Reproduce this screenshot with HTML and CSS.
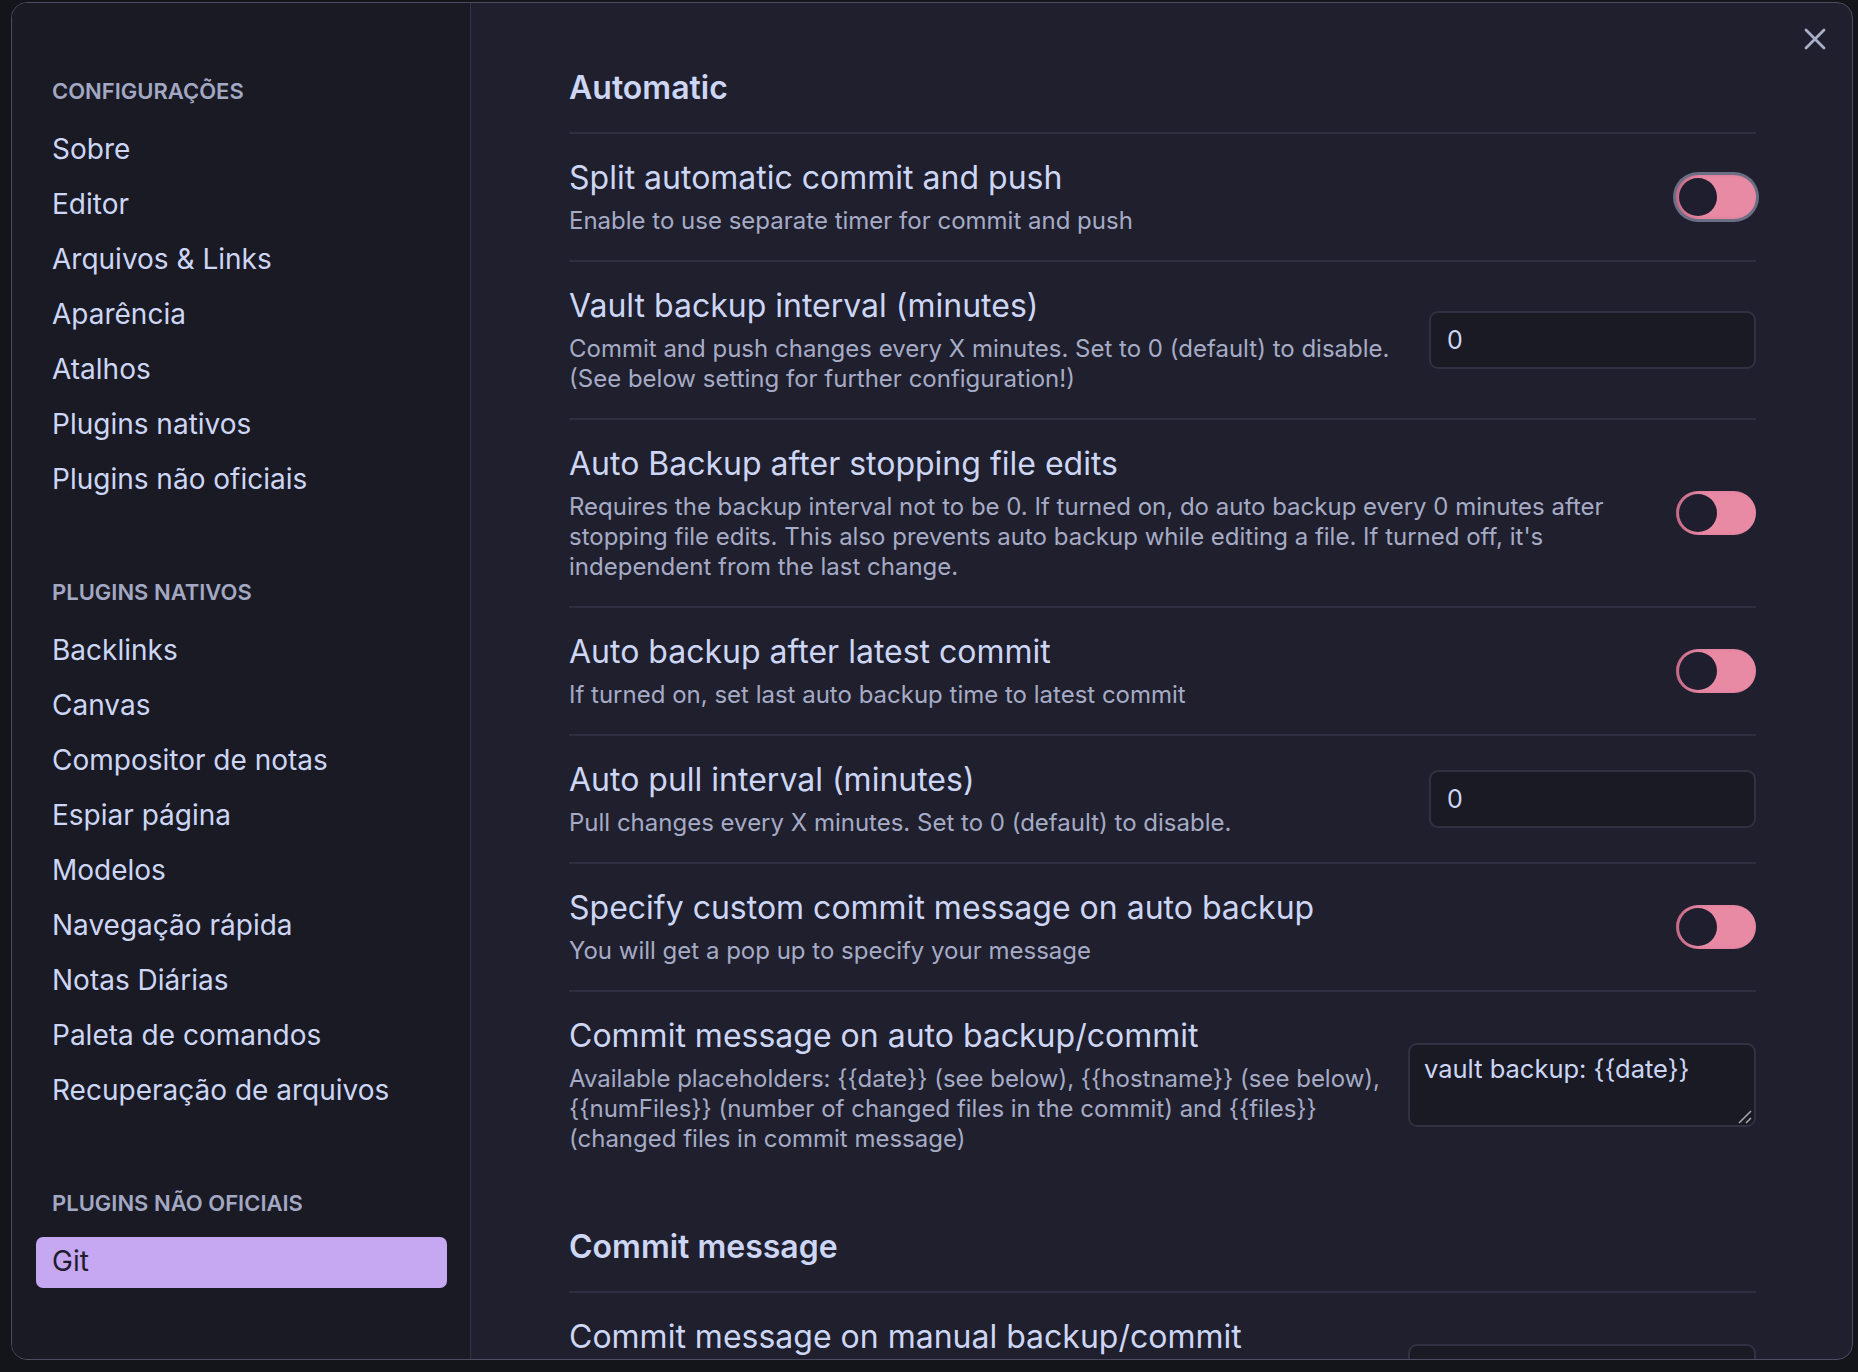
FILE: index.html
```html
<!DOCTYPE html>
<html lang="pt-BR">
<head>
<meta charset="utf-8">
<title>Configurações</title>
<link rel="stylesheet" href="styles.css">
</head>
<body>
<div class="modal">
  <button class="close-btn" aria-label="Fechar">
    <svg viewBox="0 0 22 22" width="22" height="22"><path d="M2 2 L20 20 M20 2 L2 20" /></svg>
  </button>

  <nav class="sidebar">
    <section class="nav-group">
      <div class="nav-header">CONFIGURAÇÕES</div>
      <div class="nav-item">Sobre</div>
      <div class="nav-item">Editor</div>
      <div class="nav-item">Arquivos &amp; Links</div>
      <div class="nav-item">Aparência</div>
      <div class="nav-item">Atalhos</div>
      <div class="nav-item">Plugins nativos</div>
      <div class="nav-item">Plugins não oficiais</div>
    </section>
    <section class="nav-group">
      <div class="nav-header">PLUGINS NATIVOS</div>
      <div class="nav-item">Backlinks</div>
      <div class="nav-item">Canvas</div>
      <div class="nav-item">Compositor de notas</div>
      <div class="nav-item">Espiar página</div>
      <div class="nav-item">Modelos</div>
      <div class="nav-item">Navegação rápida</div>
      <div class="nav-item">Notas Diárias</div>
      <div class="nav-item">Paleta de comandos</div>
      <div class="nav-item">Recuperação de arquivos</div>
    </section>
    <section class="nav-group">
      <div class="nav-header">PLUGINS NÃO OFICIAIS</div>
      <div class="nav-item active">Git</div>
    </section>
  </nav>

  <main class="content">
    <div class="setting-heading">Automatic</div>

    <div class="setting">
      <div class="info">
        <div class="name">Split automatic commit and push</div>
        <div class="desc">Enable to use separate timer for commit and push</div>
      </div>
      <div class="control"><div class="toggle focused"><span class="knob"></span></div></div>
    </div>

    <div class="setting">
      <div class="info">
        <div class="name">Vault backup interval (minutes)</div>
        <div class="desc">Commit and push changes every X minutes. Set to 0 (default) to disable. (See below setting for further configuration!)</div>
      </div>
      <div class="control"><input class="text-input" type="text" value="0"></div>
    </div>

    <div class="setting">
      <div class="info">
        <div class="name">Auto Backup after stopping file edits</div>
        <div class="desc">Requires the backup interval not to be 0. If turned on, do auto backup every 0 minutes after stopping file edits. This also prevents auto backup while editing a file. If turned off, it's independent from the last change.</div>
      </div>
      <div class="control"><div class="toggle"><span class="knob"></span></div></div>
    </div>

    <div class="setting">
      <div class="info">
        <div class="name">Auto backup after latest commit</div>
        <div class="desc">If turned on, set last auto backup time to latest commit</div>
      </div>
      <div class="control"><div class="toggle"><span class="knob"></span></div></div>
    </div>

    <div class="setting">
      <div class="info">
        <div class="name">Auto pull interval (minutes)</div>
        <div class="desc">Pull changes every X minutes. Set to 0 (default) to disable.</div>
      </div>
      <div class="control"><input class="text-input" type="text" value="0"></div>
    </div>

    <div class="setting">
      <div class="info">
        <div class="name">Specify custom commit message on auto backup</div>
        <div class="desc">You will get a pop up to specify your message</div>
      </div>
      <div class="control"><div class="toggle"><span class="knob"></span></div></div>
    </div>

    <div class="setting">
      <div class="info">
        <div class="name">Commit message on auto backup/commit</div>
        <div class="desc">Available placeholders: {{date}} (see below), {{hostname}} (see below), {{numFiles}} (number of changed files in the commit) and {{files}} (changed files in commit message)</div>
      </div>
      <div class="control">
        <div class="textarea-wrap">
          <textarea class="text-area">vault backup: {{date}}</textarea>
          <svg class="grip" viewBox="0 0 14 14" width="14" height="14"><path d="M1 13 L13 1 M8 13 L13 8" /></svg>
        </div>
      </div>
    </div>

    <div class="setting-heading">Commit message</div>

    <div class="setting">
      <div class="info">
        <div class="name">Commit message on manual backup/commit</div>
        <div class="desc">Available placeholders: {{date}} (see below), {{hostname}} (see below), {{numFiles}} (number of changed files in the commit) and {{files}} (changed files in commit message)</div>
      </div>
      <div class="control">
        <div class="textarea-wrap">
          <textarea class="text-area">vault backup: {{date}}</textarea>
        </div>
      </div>
    </div>
  </main>
</div>
</body>
</html>
```

FILE: styles.css
```css
* { box-sizing: border-box; }

html, body {
  margin: 0;
  padding: 0;
  width: 1858px;
  height: 1372px;
  overflow: hidden;
  background: #14141b;
  font-family: Inter, "Noto Sans", sans-serif;
  color: #cdd6f4;
}

.modal {
  position: relative;
  margin: 2px 5px 0 11px;
  width: 1842px;
  height: 1358px;
  border: 1px solid #4b4c5f;
  border-radius: 16px;
  display: flex;
  overflow: hidden;
  background: #1f1f2d;
}

.close-btn {
  position: absolute;
  top: 25px;
  right: 26px;
  width: 22px;
  height: 22px;
  padding: 0;
  border: 0;
  background: none;
  cursor: pointer;
}
.close-btn svg { display: block; }
.close-btn path {
  stroke: #a9aec9;
  stroke-width: 2.8;
  stroke-linecap: round;
  fill: none;
}

/* Sidebar */
.sidebar {
  width: 459px;
  flex: none;
  background: #1a1a25;
  border-right: 1px solid #34354a;
  padding: 73px 23px 0 24px;
  display: flex;
  flex-direction: column;
  gap: 71px;
}

.nav-group {
  display: flex;
  flex-direction: column;
  gap: 4px;
}

.nav-header {
  font-size: 22px;
  font-weight: 600;
  line-height: 30px;
  color: #a3a8c3;
  padding-left: 16px;
  margin-bottom: 15px;
}

.nav-item {
  height: 51px;
  line-height: 49px;
  padding: 0 16px;
  font-size: 28px;
  color: #cdd6f4;
  border-radius: 7px;
  white-space: nowrap;
}

.nav-item.active {
  background: #c6a7f1;
  color: #1e1e2e;
}

/* Content */
.content {
  flex: 1;
  min-width: 0;
  padding: 16px 96px 0 98px;
  overflow: hidden;
}

.setting-heading {
  font-size: 32px;
  font-weight: 600;
  line-height: 40px;
  color: #cdd6f4;
  padding: 49px 0 24px;
}

.setting {
  display: flex;
  align-items: center;
  gap: 20px;
  border-top: 2px solid #2d2e3f;
  padding: 24px 0 24px;
}

.info {
  flex: 1 1 auto;
  min-width: 0;
}

.name {
  font-size: 32px;
  line-height: 39px;
  color: #cdd6f4;
}

.desc {
  margin-top: 9px;
  font-size: 24px;
  line-height: 30px;
  color: #a6abc6;
}

.control {
  flex: none;
  display: flex;
  justify-content: flex-end;
}

.toggle {
  width: 80px;
  height: 44px;
  border-radius: 22px;
  background: #e98aa5;
  box-shadow: inset 6px 0 6px -3px rgba(120, 40, 70, 0.45);
  padding: 3px;
  display: flex;
  align-items: center;
}
.toggle.focused {
  box-shadow: inset 6px 0 6px -3px rgba(120, 40, 70, 0.45), 0 0 0 3px #6b6f85;
}

.knob {
  width: 38px;
  height: 38px;
  border-radius: 50%;
  background: #1e1e2e;
}

.text-input {
  width: 327px;
  height: 58px;
  background: #1a1a25;
  border: 2px solid #303143;
  border-radius: 9px;
  padding: 0 16px;
  font-family: Inter, sans-serif;
  font-size: 25px;
  color: #cdd6f4;
  outline: none;
}

.textarea-wrap {
  position: relative;
}

.text-area {
  display: block;
  width: 348px;
  height: 84px;
  background: #1a1a25;
  border: 2px solid #303143;
  border-radius: 9px;
  padding: 8px 14px;
  font-family: Inter, sans-serif;
  font-size: 25.5px;
  line-height: 32px;
  color: #cdd6f4;
  resize: none;
  outline: none;
}

.grip {
  position: absolute;
  right: 4px;
  bottom: 3px;
}
.grip path {
  stroke: #a3a3ab;
  stroke-width: 1.6;
  fill: none;
}
```
